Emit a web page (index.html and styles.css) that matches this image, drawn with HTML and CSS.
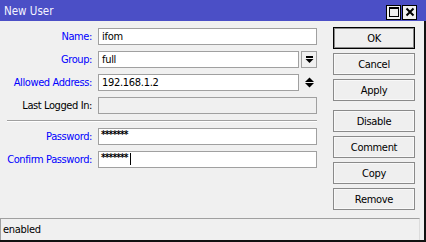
FILE: index.html
```html
<!DOCTYPE html>
<html>
<head>
<meta charset="utf-8">
<link rel="stylesheet" href="styles.css">
</head>
<body>
<div class="window">
  <div class="titlebar">
    <span class="title">New User</span>
    <div class="title-btns">
      <span class="tbtn">
        <svg width="12" height="12" viewBox="0 0 12 12"><rect x="1.5" y="1.5" width="9" height="9" fill="none" stroke="#000" stroke-width="1"/><rect x="1" y="1" width="10" height="2" fill="#000"/></svg>
      </span>
      <span class="tbtn">
        <svg width="12" height="12" viewBox="0 0 12 12"><path d="M2.5 2.5 L9.5 9.5 M9.5 2.5 L2.5 9.5" stroke="#000" stroke-width="2"/></svg>
      </span>
    </div>
  </div>
  <div class="body">
    <div class="main">
      <div class="form">
        <div class="row">
          <span class="lbl blue">Name:</span>
          <div class="field"><div class="input">ifom</div></div>
        </div>
        <div class="row">
          <span class="lbl blue">Group:</span>
          <div class="field">
            <div class="input short">full</div>
            <span class="dropbtn">
              <svg width="9" height="8" viewBox="0 0 9 8"><rect x="1" y="0" width="7" height="2" fill="#000"/><path d="M0.5 3 L8.5 3 L4.5 7 Z" fill="#000"/></svg>
            </span>
          </div>
        </div>
        <div class="row">
          <span class="lbl blue">Allowed Address:</span>
          <div class="field">
            <div class="input short">192.168.1.2</div>
            <span class="spin">
              <svg width="11" height="11" viewBox="0 0 11 11"><path d="M5.5 0.5 L10 5 L1 5 Z" fill="#000"/><path d="M1 6 L10 6 L5.5 10.5 Z" fill="#000"/></svg>
            </span>
          </div>
        </div>
        <div class="row">
          <span class="lbl">Last Logged In:</span>
          <div class="field"><div class="input disabled"></div></div>
        </div>
        <div class="sep"></div>
        <div class="row">
          <span class="lbl blue">Password:</span>
          <div class="field"><div class="input pw">*******</div></div>
        </div>
        <div class="row">
          <span class="lbl blue">Confirm Password:</span>
          <div class="field"><div class="input pw">*******<span class="caret"></span></div></div>
        </div>
      </div>
      <div class="buttons">
        <div class="btn default">OK</div>
        <div class="btn">Cancel</div>
        <div class="btn">Apply</div>
        <div class="btn gap">Disable</div>
        <div class="btn">Comment</div>
        <div class="btn">Copy</div>
        <div class="btn">Remove</div>
      </div>
    </div>
    <div class="status">enabled</div>
  </div>
</div>
</body>
</html>
```

FILE: styles.css
```css
html, body {
  margin: 0;
  padding: 0;
  background: #f0f0f0;
}
body {
  width: 426px;
  height: 242px;
  overflow: hidden;
  font-family: "DejaVu Sans Condensed", "DejaVu Sans", sans-serif;
  font-stretch: condensed;
  font-size: 11px;
  letter-spacing: -0.3px;
  color: #000;
}
.window {
  width: 426px;
  height: 242px;
  display: flex;
  flex-direction: column;
}
.titlebar {
  height: 21px;
  background: #4b4fc6;
  display: flex;
  align-items: center;
  justify-content: space-between;
  padding-left: 4px;
  flex: none;
}
.title {
  color: #f4f4ff;
  font-size: 11.5px;
  letter-spacing: 0;
}
.title-btns {
  display: flex;
  gap: 1px;
  margin-right: 9px;
  margin-top: 3px;
}
.tbtn {
  width: 13px;
  height: 13px;
  border: 1px solid #000;
  background: #f0f0f0;
  display: flex;
  align-items: center;
  justify-content: center;
}
.body {
  flex: 1;
  display: flex;
  flex-direction: column;
  border-right: 2px solid #111;
  border-bottom: 2px solid #111;
}
.main {
  flex: 1;
  display: flex;
  padding-top: 6px;
}
.form {
  width: 317px;
  padding-top: 1px;
  display: flex;
  flex-direction: column;
  gap: 6px;
}
.row {
  display: flex;
  align-items: center;
  height: 17px;
}
.lbl {
  width: 92px;
  text-align: right;
  letter-spacing: -0.4px;
  white-space: nowrap;
}
.blue {
  color: #0000ff;
}
.field {
  margin-left: 6px;
  width: 219px;
  height: 17px;
  display: flex;
  align-items: center;
}
.input {
  box-sizing: border-box;
  width: 219px;
  height: 17px;
  border: 1px solid #a0a0a0;
  background: #fff;
  padding-left: 3px;
  line-height: 15px;
  white-space: nowrap;
  display: flex;
  align-items: center;
}
.input.short {
  width: 201px;
}
.input.disabled {
  background: #f0f0f0;
}
.input.pw {
  font-weight: bold;
  font-size: 10px;
  letter-spacing: -0.9px;
  align-items: flex-start;
  line-height: 11px;
  padding-left: 2px;
}
.caret {
  display: inline-block;
  width: 1px;
  height: 12px;
  background: #000;
  margin-left: 2px;
  margin-top: 1px;
}
.dropbtn {
  box-sizing: border-box;
  margin-left: 2px;
  width: 16px;
  height: 17px;
  border: 1px solid #a0a0a0;
  display: flex;
  align-items: center;
  justify-content: center;
}
.spin {
  margin-left: 5px;
  width: 11px;
  height: 11px;
  display: flex;
}
.sep {
  margin-left: 7px;
  width: 310px;
  height: 0;
  border-top: 1px solid #a0a0a0;
  border-bottom: 1px solid #fff;
}
.buttons {
  margin-left: 16px;
  width: 82px;
  display: flex;
  flex-direction: column;
  gap: 4px;
}
.btn {
  box-sizing: border-box;
  height: 22px;
  border: 1px solid #8a8a8a;
  background: #efefef;
  box-shadow: inset 0 0 0 1px #f8f8f8;
  display: flex;
  align-items: center;
  justify-content: center;
}
.btn.default {
  border: 1px solid #000;
  box-shadow: inset 0 0 0 1px #8a8a8a;
}
.btn.gap {
  margin-top: 5px;
}
.status {
  height: 21px;
  margin-right: 4px;
  border-top: 1px solid #a0a0a0;
  border-left: 1px solid #a0a0a0;
  border-right: 1px solid #dcdcdc;
  padding-left: 2px;
  display: flex;
  align-items: center;
  flex: none;
}
```
